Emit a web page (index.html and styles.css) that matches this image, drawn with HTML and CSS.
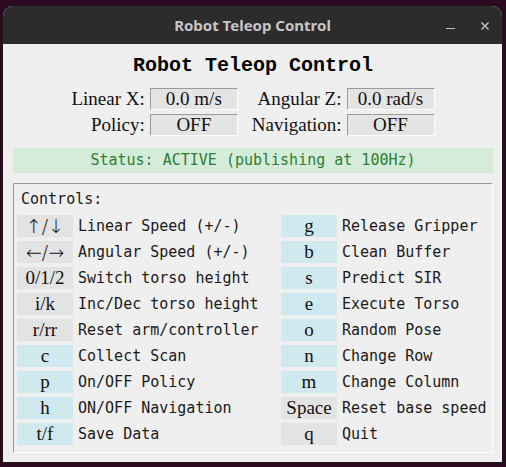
FILE: index.html
```html
<!DOCTYPE html>
<html>
<head>
<meta charset="utf-8">
<link rel="stylesheet" href="styles.css">
</head>
<body>
<div class="window">
  <div class="titlebar">
    <span></span>
    <span class="title">Robot Teleop Control</span>
    <div class="wm-buttons">
      <svg class="wm-btn" width="16" height="16" viewBox="0 0 16 16"><line x1="4" y1="10.5" x2="13" y2="10.5" stroke="#bdbdbd" stroke-width="1"/></svg>
      <svg class="wm-btn" width="16" height="16" viewBox="0 0 16 16"><path d="M4.5 4.5 L11.5 11.5 M11.5 4.5 L4.5 11.5" stroke="#c4c4c4" stroke-width="1.4" fill="none"/></svg>
    </div>
  </div>
  <div class="content">
    <h1 class="heading">Robot Teleop Control</h1>
    <div class="info">
      <span class="lbl">Linear X:</span><span class="val">0.0 m/s</span>
      <span class="lbl lbl2">Angular Z:</span><span class="val">0.0 rad/s</span>
      <span class="lbl">Policy:</span><span class="val">OFF</span>
      <span class="lbl lbl2">Navigation:</span><span class="val">OFF</span>
    </div>
    <div class="status">Status: ACTIVE (publishing at 100Hz)</div>
    <div class="controls">
      <div class="controls-title">Controls:</div>
      <div class="keys">
        <span class="key arrows">↑/↓</span><span class="desc">Linear Speed (+/-)</span>
        <span class="key blue">g</span><span class="desc">Release Gripper</span>
        <span class="key arrows">←/→</span><span class="desc">Angular Speed (+/-)</span>
        <span class="key blue">b</span><span class="desc">Clean Buffer</span>
        <span class="key">0/1/2</span><span class="desc">Switch torso height</span>
        <span class="key blue">s</span><span class="desc">Predict SIR</span>
        <span class="key">i/k</span><span class="desc">Inc/Dec torso height</span>
        <span class="key blue">e</span><span class="desc">Execute Torso</span>
        <span class="key">r/rr</span><span class="desc">Reset arm/controller</span>
        <span class="key blue">o</span><span class="desc">Random Pose</span>
        <span class="key blue">c</span><span class="desc">Collect Scan</span>
        <span class="key blue">n</span><span class="desc">Change Row</span>
        <span class="key blue">p</span><span class="desc">On/OFF Policy</span>
        <span class="key blue">m</span><span class="desc">Change Column</span>
        <span class="key blue">h</span><span class="desc">ON/OFF Navigation</span>
        <span class="key">Space</span><span class="desc">Reset base speed</span>
        <span class="key blue">t/f</span><span class="desc">Save Data</span>
        <span class="key">q</span><span class="desc">Quit</span>
      </div>
    </div>
  </div>
</div>
</body>
</html>
```

FILE: styles.css
```css
* { box-sizing: border-box; }
html, body { margin: 0; }
body {
  background: #2e0a22;
  padding: 6px 4px 5px 3px;
  width: 506px;
  height: 467px;
  overflow: hidden;
}
.window {
  width: 499px;
  height: 456px;
  display: flex;
  flex-direction: column;
  border-radius: 10px 10px 0 0;
  overflow: hidden;
  box-shadow: 0 0 0 1px #1a1a1a;
  background: #efefef;
}
.titlebar {
  height: 38px;
  flex: none;
  background: #2c2c2c;
  display: grid;
  grid-template-columns: 1fr auto 1fr;
  align-items: center;
}
.title {
  font-family: "Noto Sans", sans-serif;
  font-weight: bold;
  font-size: 15px;
  color: #c6c6c6;
}
.wm-buttons {
  justify-self: end;
  display: flex;
  gap: 19px;
  padding-right: 9px;
  padding-top: 1px;
}
.wm-btn { display: block; }
.content {
  flex: 1;
  padding: 10px 9px 8px 10px;
  display: flex;
  flex-direction: column;
}
.heading {
  margin: 0;
  height: 24px;
  line-height: 24px;
  text-align: center;
  font-family: "Liberation Mono", monospace;
  font-weight: bold;
  font-size: 20px;
  color: #000;
}
.info {
  margin-top: 10px;
  display: grid;
  grid-template-columns: auto 88px auto 88px;
  grid-auto-rows: 22px;
  column-gap: 5px;
  row-gap: 4px;
  justify-content: center;
  font-family: "Liberation Serif", serif;
  font-size: 19px;
  color: #111;
}
.lbl {
  text-align: right;
  line-height: 22px;
}
.lbl2 { padding-left: 9px; }
.val {
  background: #e4e4e4;
  border-top: 1px solid #9a9a9a;
  border-left: 1px solid #9a9a9a;
  border-right: 1px solid #ffffff;
  border-bottom: 1px solid #ffffff;
  text-align: center;
  line-height: 20px;
}
.status {
  margin-top: 12px;
  height: 25px;
  background: #d4ecd9;
  color: #2e7d32;
  font-family: "DejaVu Sans Mono", monospace;
  font-size: 15px;
  line-height: 25px;
  text-align: center;
}
.controls {
  margin-top: 10px;
  border-top: 1px solid #9a9a9a;
  border-left: 1px solid #9a9a9a;
  border-right: 1px solid #ffffff;
  border-bottom: 1px solid #ffffff;
  padding: 4px 3px 7px 3px;
  font-family: "DejaVu Sans Mono", monospace;
  font-size: 15px;
  color: #1a1a1a;
}
.controls-title {
  height: 22px;
  line-height: 22px;
  padding-left: 4px;
  margin-bottom: 5px;
}
.keys {
  display: grid;
  grid-template-columns: 56px 198px 56px auto;
  grid-auto-rows: 22px;
  column-gap: 5px;
  row-gap: 4px;
}
.key {
  background: #e3e3e3;
  font-family: "Liberation Serif", serif;
  font-size: 19px;
  line-height: 22px;
  text-align: center;
  color: #111;
}
.key.arrows {
  font-family: "DejaVu Sans", sans-serif;
  font-size: 19px;
  font-weight: 300;
}
.key.blue { background: #d0e9ef; }
.desc {
  line-height: 22px;
  white-space: nowrap;
}
```
